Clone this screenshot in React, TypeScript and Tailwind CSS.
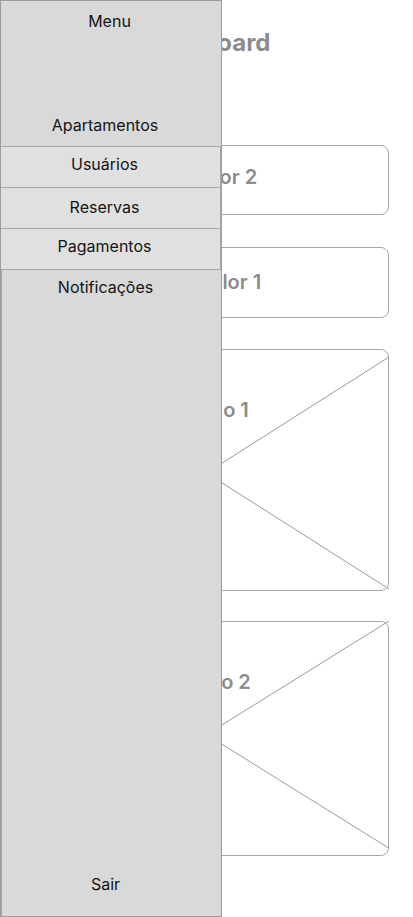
const navRows = [
  { label: "Usuários", pad: "pt-[5px]" },
  { label: "Reservas", pad: "pt-[7px]" },
  { label: "Pagamentos", pad: "pt-[5px]" },
];

function Placeholder({ top, bottom }: { top: number; bottom: number }) {
  return (
    <svg
      className="absolute inset-0 h-full w-full overflow-visible"
      viewBox="0 0 363 240"
      preserveAspectRatio="none"
    >
      <line x1="-1" y1={top} x2="364" y2={bottom} stroke="#9a9a9a" strokeWidth="1" />
      <line x1="-1" y1={bottom} x2="364" y2={top} stroke="#9a9a9a" strokeWidth="1" />
    </svg>
  );
}

export default function App() {
  return (
    <div className="relative w-[413px] h-[917px] overflow-hidden bg-white font-['Inter',sans-serif]">
      {/* Dashboard content */}
      <main className="px-6 pt-[27px]">
        <h1 className="text-center text-2xl leading-8 font-bold text-[#8c8c8c]">Dashboard</h1>

        <div className="mt-[86px] h-[70px] rounded-lg border border-[#a8a8a8] pt-[17px] pr-[12px] text-center text-xl leading-7 font-semibold text-[#8c8c8c]">
          Meu valor 2
        </div>
        <div className="mt-[32px] h-[71px] rounded-lg border border-[#a8a8a8] pt-[20px] text-center text-xl leading-7 font-semibold text-[#8c8c8c]">
          Meu valor 1
        </div>

        <div className="relative mt-[31px] h-[242px] rounded-lg border border-[#a8a8a8]">
          <Placeholder top={7} bottom={239} />
          <p className="relative pt-[46px] text-center text-xl leading-7 font-semibold text-[#8c8c8c]">Gráfico 1</p>
        </div>
        <div className="relative mt-[30px] h-[235px] rounded-lg border border-[#a8a8a8]">
          <Placeholder top={-1} bottom={233} />
          <p className="relative pt-[46px] text-center text-xl leading-7 font-semibold text-[#8c8c8c]">Gráfico 2</p>
        </div>
      </main>

      {/* Side menu overlay */}
      <aside className="absolute left-0 top-0 flex h-[917px] w-[222px] flex-col border border-[#9c9c9c] bg-[#d9d9d9] text-base leading-6 text-[#141414]">
        <div className="flex h-[146px] flex-col items-center border-b border-[#a6a6a6] pt-[8px] pb-[9px]">
          <span className="pr-[3px]">Menu</span>
          <span className="mt-auto pr-[12px]">Apartamentos</span>
        </div>
        {navRows.map((row) => (
          <div
            key={row.label}
            className={`h-[41px] border-b border-r border-[#a6a6a6] bg-[#e0e0e0] pr-[12px] text-center ${row.pad}`}
          >
            {row.label}
          </div>
        ))}
        <div className="flex flex-1 flex-col items-center border-l border-[#a6a6a6] pt-[5px] pb-[20px] pr-[12px]">
          <span>Notificações</span>
          <span className="mt-auto">Sair</span>
        </div>
      </aside>
    </div>
  );
}
